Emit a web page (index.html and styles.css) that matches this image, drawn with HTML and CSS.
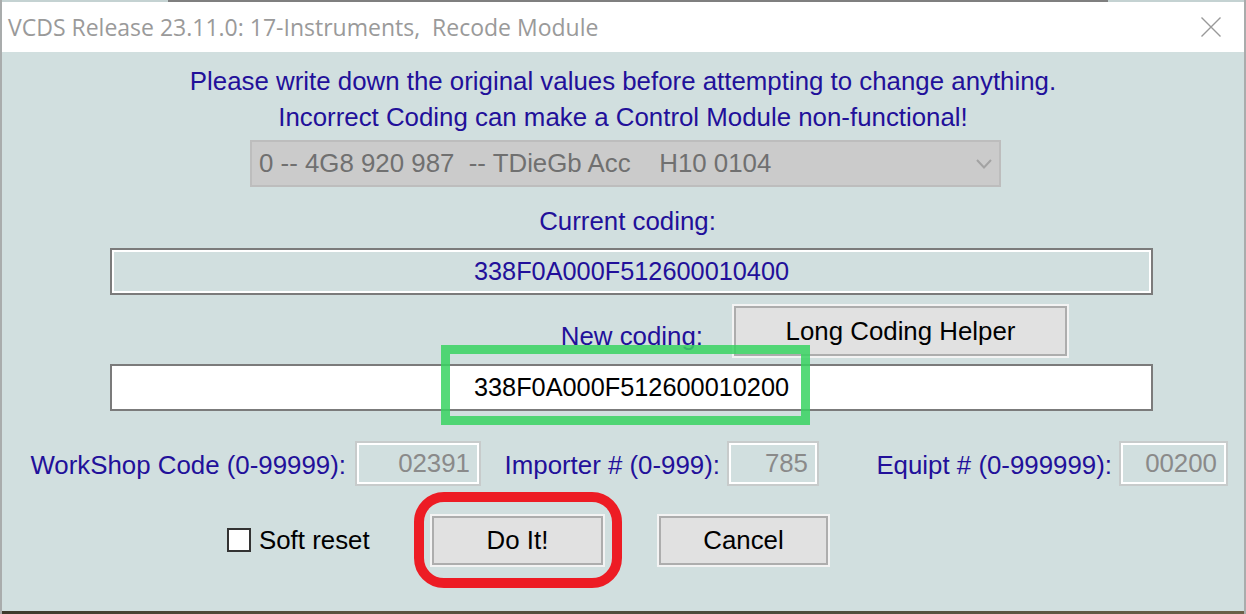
FILE: index.html
```html
<!DOCTYPE html>
<html>
<head>
<meta charset="utf-8">
<link rel="stylesheet" href="styles.css">
</head>
<body>
<div class="window">
  <div class="topline"></div>
  <div class="titlebar">
    <span class="title">VCDS Release 23.11.0: 17-Instruments,  Recode Module</span>
    <svg class="close" width="20" height="20" viewBox="0 0 20 20"><path d="M0.5 0.5 L19.5 19.5 M19.5 0.5 L0.5 19.5" stroke="#999" stroke-width="1.4" fill="none"/></svg>
  </div>
  <div class="content">
    <p class="notice">Please write down the original values before attempting to change anything.<br>Incorrect Coding can make a Control Module non-functional!</p>
    <div class="select">
      <span>0 -- 4G8 920 987  -- TDieGb Acc    H10 0104</span>
      <svg width="16" height="10" viewBox="0 0 16 10"><path d="M1 1 L8 8.5 L15 1" stroke="#a3a3a3" stroke-width="2" fill="none"/></svg>
    </div>
    <div class="caption">Current coding:</div>
    <div class="code-box current">338F0A000F512600010400</div>
    <div class="new-row">
      <span class="new-label">New coding:</span>
      <button class="btn helper">Long Coding Helper</button>
    </div>
    <div class="code-box new">338F0A000F512600010200</div>
    <div class="fields">
      <span class="field-label f1">WorkShop Code (0-99999):</span>
      <div class="small-box b1">02391</div>
      <span class="field-label f2">Importer # (0-999):</span>
      <div class="small-box b2">785</div>
      <span class="field-label f3">Equipt # (0-999999):</span>
      <div class="small-box b3">00200</div>
    </div>
    <div class="actions">
      <div class="check-group">
        <span class="checkbox"></span>
        <span class="check-label">Soft reset</span>
      </div>
      <button class="btn doit">Do It!</button>
      <button class="btn cancel">Cancel</button>
    </div>
  </div>
  <div class="bottomline"></div>
  <div class="mark-green"></div>
  <div class="mark-red"></div>
</div>
</body>
</html>
```
FILE: styles.css
```css
html, body {
  margin: 0;
  padding: 0;
}
body {
  width: 1246px;
  height: 614px;
  overflow: hidden;
  font-family: "Liberation Sans", Arial, sans-serif;
}
.window {
  position: relative;
  height: 614px;
  box-sizing: border-box;
  display: flex;
  flex-direction: column;
  background: #d1dfdf;
  border-left: 2px solid #a9acac;
  border-right: 2px solid #a9acac;
}
.topline {
  height: 2px;
  background: linear-gradient(to right, #c4d2d2 0, #c4d2d2 166px, #7f7f7f 166px, #7f7f7f 1106px, #c4d2d2 1106px);
}
.titlebar {
  height: 50px;
  background: #fff;
  display: flex;
  align-items: center;
  justify-content: space-between;
  padding: 0 23px 0 6px;
}
.title {
  font-family: "Open Sans", "Noto Sans", sans-serif;
  font-size: 23px;
  color: #9a9a9a;
  white-space: pre;
}
.close {
  display: block;
}
.content {
  flex: 1;
  font-size: 25.85px;
}
.notice {
  margin: 0;
  padding-top: 11px;
  text-align: center;
  line-height: 36px;
  color: #22109a;
}
.select {
  margin: 5px 0 0 248px;
  width: 751px;
  height: 47px;
  box-sizing: border-box;
  border: 2px solid #bdbdbd;
  background: #cbcbcb;
  display: flex;
  align-items: center;
  justify-content: space-between;
  padding: 0 7px 0 7px;
  color: #707070;
  white-space: pre;
}
.caption {
  margin-top: 16px;
  padding-left: 9px;
  text-align: center;
  line-height: 36px;
  color: #22109a;
}
.code-box {
  margin: 9px 0 0 108px;
  width: 1043px;
  height: 47px;
  box-sizing: border-box;
  border: 2px solid #7b7b7b;
  display: flex;
  align-items: center;
  justify-content: center;
  font-size: 25.3px;
}
.current {
  background: #d1dfdf;
  box-shadow: inset 0 0 0 2px #fff;
  color: #22109a;
}
.new {
  margin-top: 8px;
  background: #fff;
  color: #000;
}
.new-row {
  margin-top: 11px;
  height: 50px;
  display: flex;
}
.new-label {
  width: 701px;
  box-sizing: border-box;
  text-align: right;
  padding-top: 12px;
  line-height: 36px;
  color: #22109a;
}
.btn {
  font-family: inherit;
  font-size: 25.85px;
  color: #000;
  background: #e1e1e1;
  border: 2px solid #adadad;
  box-shadow: 0 0 0 2px #f3f3f3;
  padding: 0;
  box-sizing: border-box;
}
.helper {
  margin-left: 31px;
  width: 333px;
  height: 50px;
}
.fields {
  margin-top: 30px;
  height: 45px;
  display: flex;
  align-items: center;
  color: #22109a;
}
.field-label {
  text-align: right;
  padding-top: 4px;
  white-space: nowrap;
}
.f1 { width: 344px; }
.f2 { width: 239px; }
.f3 { width: 293px; }
.small-box {
  height: 45px;
  box-sizing: border-box;
  border: 2px solid #c7cbcb;
  box-shadow: inset 0 0 0 2px #fff;
  color: #8a8a8a;
  display: flex;
  align-items: center;
  justify-content: flex-end;
  padding-right: 9px;
}
.b1 { margin-left: 9px; width: 126px; }
.b2 { margin-left: 7px; width: 92px; }
.b3 { margin-left: 7px; width: 109px; }
.actions {
  margin-top: 27px;
  height: 54px;
  display: flex;
  align-items: center;
}
.check-group {
  width: 430px;
  box-sizing: border-box;
  padding-left: 225px;
  display: flex;
  align-items: center;
}
.checkbox {
  width: 24px;
  height: 24px;
  box-sizing: border-box;
  border: 2px solid #333;
  background: #fff;
}
.check-label {
  margin-left: 8px;
  color: #000;
}
.doit {
  width: 171px;
  height: 49px;
}
.cancel {
  margin-left: 56px;
  width: 169px;
  height: 49px;
}
.bottomline {
  height: 3px;
  background: linear-gradient(to right, #3d3a2c, #5c5440 30%, #4a4a3a 60%, #6a6048);
}
.mark-green {
  position: absolute;
  left: 439px;
  top: 345px;
  width: 369px;
  height: 80px;
  box-sizing: border-box;
  border: 9px solid rgba(56, 212, 97, 0.85);
}
.mark-red {
  position: absolute;
  left: 412px;
  top: 492px;
  width: 208px;
  height: 96px;
  box-sizing: border-box;
  border: 10px solid #ed1c24;
  border-radius: 30px;
}
```
